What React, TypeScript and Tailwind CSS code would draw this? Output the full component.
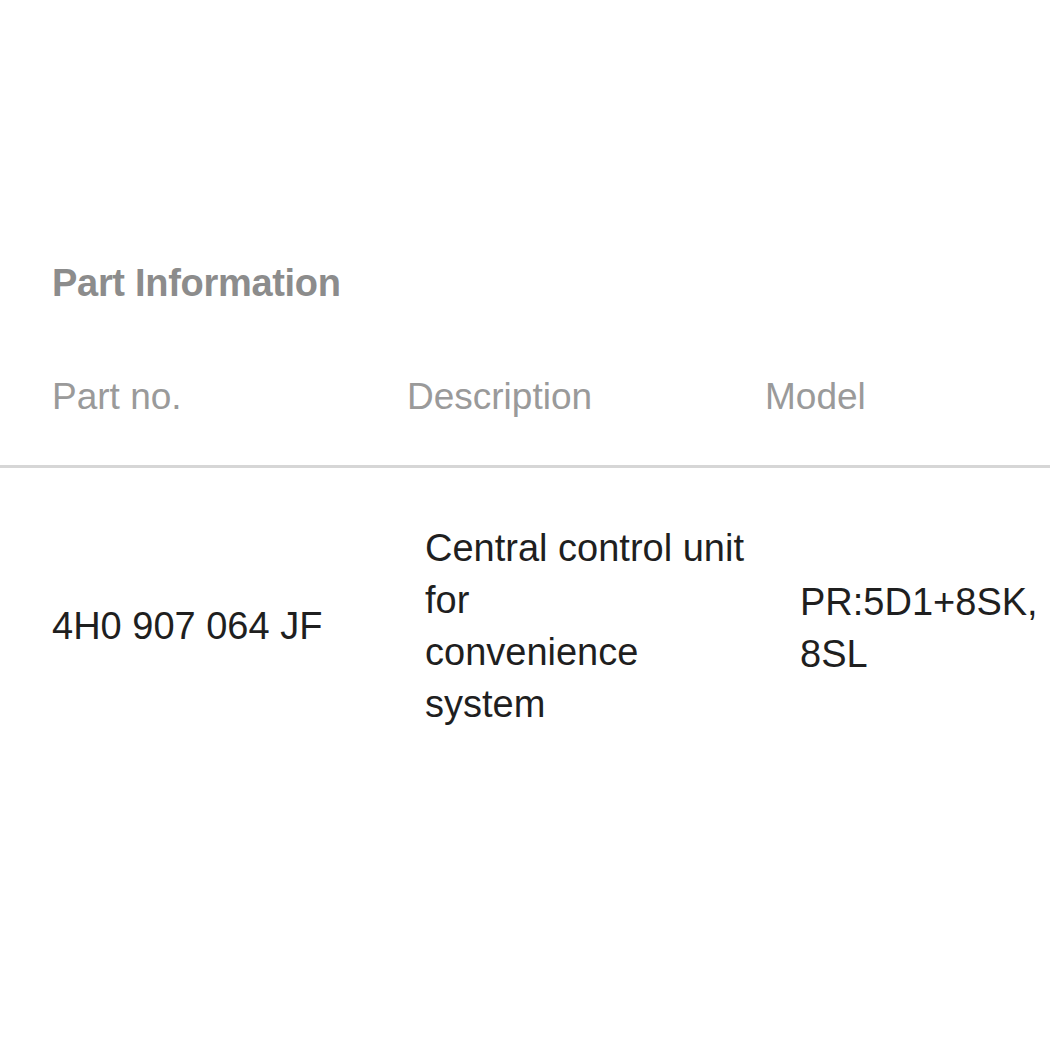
export default function App() {
  return (
    <div className="w-[1050px] h-[1050px] bg-white overflow-hidden" style={{ fontFamily: '"Liberation Sans", Arial, sans-serif' }}>
      <div className="pt-[257px]">
        <div className="pl-[52px] h-[52px] leading-[52px] text-[38px] font-bold text-[#8c8c8c] tracking-[-0.3px]">Part Information</div>
        <div className="mt-[62px] flex h-[52px] leading-[52px] text-[37px] text-[#9a9a9a]">
          <div className="pl-[52px] w-[407px]">Part no.</div>
          <div className="w-[358px]">Description</div>
          <div>Model</div>
        </div>
        <div className="mt-[42px] h-[3px] bg-[#d6d6d6]" />
        <div className="mt-[54px] flex items-center text-[38px] leading-[52px] text-[#1f1f1f]">
          <div className="pl-[52px] w-[425px]">4H0 907 064 JF</div>
          <div className="w-[375px]">
            <div>Central control unit</div>
            <div>for</div>
            <div>convenience</div>
            <div>system</div>
          </div>
          <div className="pt-[4px]">
            <div>PR:5D1+8SK,</div>
            <div>8SL</div>
          </div>
        </div>
      </div>
    </div>
  );
}
